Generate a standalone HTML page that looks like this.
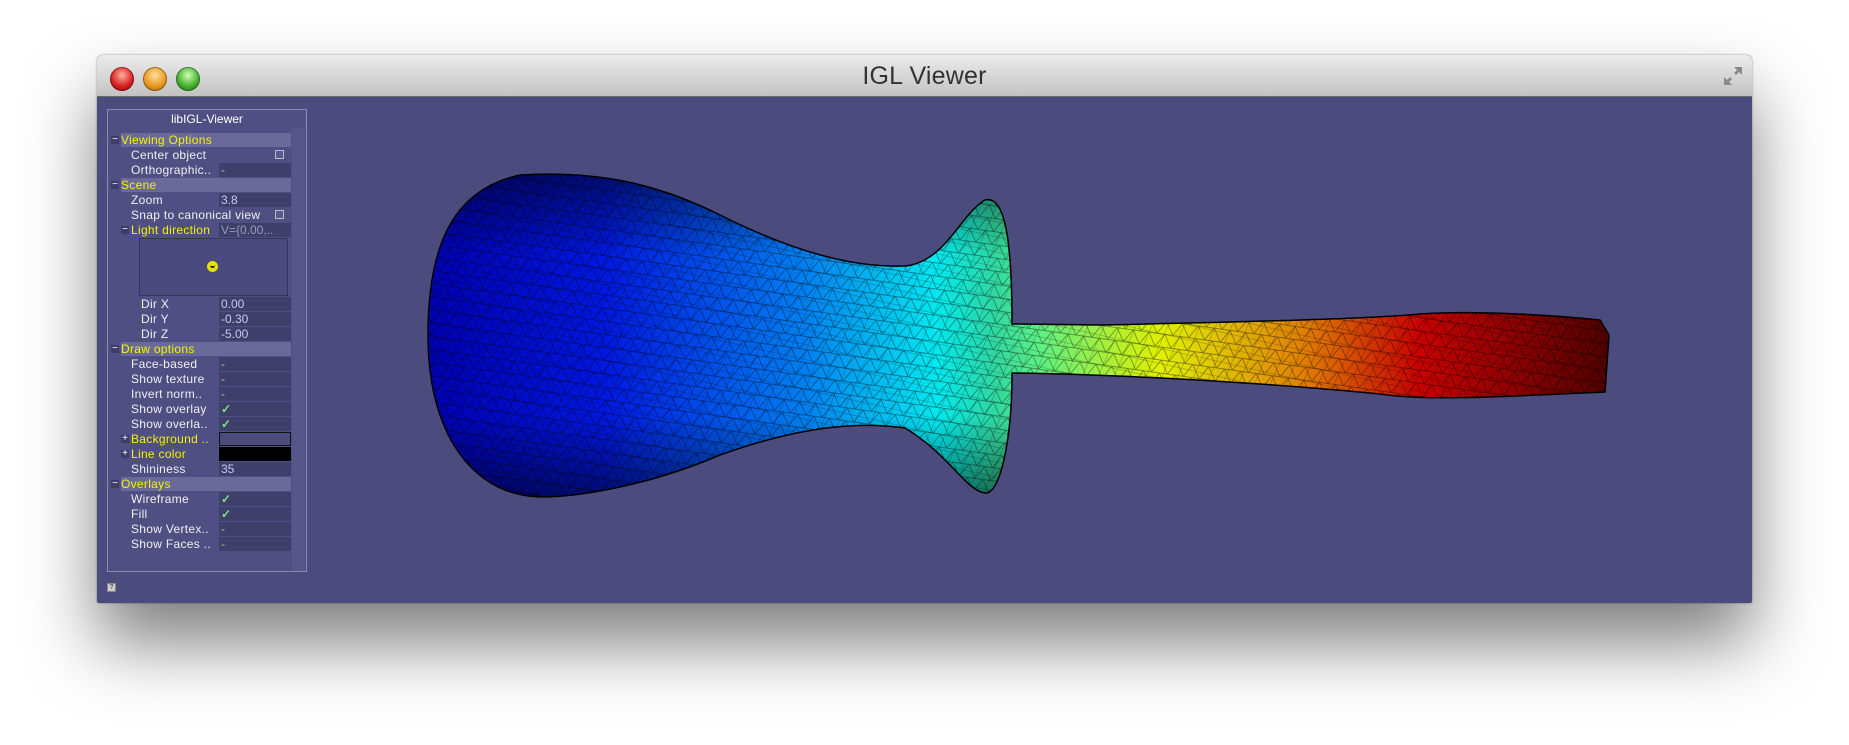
<!DOCTYPE html>
<html><head><meta charset="utf-8"><style>
*{margin:0;padding:0;box-sizing:border-box}
body{width:1849px;height:745px;background:#fff;position:relative;overflow:hidden;font-family:"Liberation Sans",sans-serif}
.win{position:absolute;left:97px;top:55px;width:1655px;height:548px;border-radius:6px 6px 2px 2px;box-shadow:0 40px 70px rgba(0,0,0,.5),0 0 2px rgba(0,0,0,.4);background:#4b4b7d;overflow:hidden}
.tb{position:absolute;left:0;top:0;width:100%;height:42px;background:linear-gradient(#ececec,#d3d3d3 60%,#c2c2c2);border-bottom:1px solid #6a6a6a}
.tb .t{position:absolute;left:0;width:100%;top:7px;text-align:center;font-size:25px;color:#333;letter-spacing:.2px}
.btn{position:absolute;top:12px;width:24px;height:24px;border-radius:50%;box-shadow:inset 0 0 0 1px rgba(0,0,0,.35)}
.panel{position:absolute;left:10px;top:54px;width:200px;height:463px;background:#4f4f83;border:1px solid #8a8ab0;}
.panel .ttl{position:absolute;left:0;width:100%;top:2px;text-align:center;color:#fff;font-size:12px}
.sb{position:absolute;left:184px;top:18px;width:13px;height:443px;background:#56568a}
.r{position:absolute;height:14px;font-size:12px;line-height:14px;color:#f0f0f0;letter-spacing:.3px;white-space:nowrap}
.h{background:#6a6a9a;color:#f4f400;left:14px;width:170px;padding-left:0}
.v{position:absolute;left:112px;width:72px;height:14px;background:#3f3f6c;font-size:12px;line-height:14px;color:#c8c8ee;padding-left:2px}
.m{position:absolute;width:8px;height:8px;background:#3c3c66;color:#fff;font-size:10px;line-height:7px;text-align:center}
.g{color:#7fe07f}
</style></head><body>
<div class="win">
 <div class="tb">
  <div class="btn" style="left:13px;background:radial-gradient(circle at 50% 35%,#ffb0a0,#d82020 55%,#900000)"></div>
  <div class="btn" style="left:46px;background:radial-gradient(circle at 50% 35%,#ffe0a0,#e89a20 55%,#a05800)"></div>
  <div class="btn" style="left:79px;background:radial-gradient(circle at 50% 35%,#d0ffb0,#48b030 55%,#1c7010)"></div>
  <div class="t">IGL Viewer</div>
  <svg style="position:absolute;right:8px;top:10px" width="22" height="22" viewBox="0 0 22 22"><path d="M12 2h8v8l-3-3-3 3-2-2 3-3z M10 20H2v-8l3 3 3-3 2 2-3 3z" fill="#8a8a8a"/></svg>
 </div>
 <svg style="position:absolute;left:-97px;top:-55px" width="1849" height="745">
  <defs>
   <linearGradient id="cg" gradientUnits="userSpaceOnUse" x1="428" y1="0" x2="1609" y2="0">
    <stop offset="0" stop-color="#0000b0"/><stop offset=".15" stop-color="#0018e0"/><stop offset=".32" stop-color="#0080f0"/><stop offset=".43" stop-color="#00e8f0"/><stop offset=".48" stop-color="#30d8a0"/><stop offset=".52" stop-color="#60f080"/><stop offset=".62" stop-color="#e0f000"/><stop offset=".74" stop-color="#e08000"/><stop offset=".84" stop-color="#c80000"/><stop offset="1" stop-color="#500000"/>
   </linearGradient>
   <linearGradient id="sh" x1="0" y1="0" x2="0" y2="1">
    <stop offset="0" stop-color="#000" stop-opacity=".5"/><stop offset=".25" stop-color="#000" stop-opacity="0"/><stop offset=".75" stop-color="#000" stop-opacity="0"/><stop offset="1" stop-color="#000" stop-opacity=".5"/>
   </linearGradient>
   <pattern id="wf" width="16" height="13" patternUnits="userSpaceOnUse" patternTransform="rotate(8)">
    <path d="M0 0H16M0 0L8 13M16 0L8 13M0 13H16" stroke="#000" stroke-opacity=".5" stroke-width=".7" fill="none"/>
   </pattern>
   <pattern id="wf2" width="23" height="19" patternUnits="userSpaceOnUse" patternTransform="rotate(-27)">
    <path d="M0 0L23 19M0 19L23 0" stroke="#000" stroke-opacity=".3" stroke-width=".6" fill="none"/>
   </pattern>
   <path id="shape" d="M428 336C428 250 450 190 520 175C600 170 660 185 720 215C790 250 850 268 905 266C945 262 960 215 985 200C1005 195 1012 240 1012 324L1100 325C1250 322 1380 318 1420 314C1480 310 1560 316 1600 320L1609 335L1605 392L1560 394C1480 398 1420 400 1380 394C1300 386 1150 375 1012 373C1012 440 1000 495 985 493C965 490 950 455 905 428C850 420 790 430 720 455C650 485 580 497 540 497C470 495 428 430 428 336Z"/>
  </defs>
  <use href="#shape" fill="url(#cg)"/>
  <use href="#shape" fill="url(#sh)"/>
  <use href="#shape" fill="url(#wf)"/>
  <use href="#shape" fill="url(#wf2)"/>
  <use href="#shape" fill="none" stroke="#000" stroke-width="1.5"/>
 </svg>
 <div class="panel">
  <div class="ttl">libIGL-Viewer</div>
  <div class="sb"></div>
 </div>
 <div style="position:absolute;left:10px;top:528px;width:9px;height:9px;background:#ccc;border:1px solid #888;font-size:7px;line-height:7px;text-align:center;color:#333">?</div>
</div>
<div style="position:absolute;left:0;top:0">
<div class="m" style="left:111px;top:136px">−</div><div class="r h" style="left:121px;top:133px;width:170px">Viewing Options</div>
<div class="r" style="left:131px;top:148px">Center object</div><div style="position:absolute;left:275px;top:150px;width:9px;height:9px;border:1px solid #bbb;background:#5a5a90"></div>
<div class="r" style="left:131px;top:163px">Orthographic..</div><div class="v g" style="left:219px;top:163px">-</div>
<div class="m" style="left:111px;top:181px">−</div><div class="r h" style="left:121px;top:178px;width:170px">Scene</div>
<div class="r" style="left:131px;top:193px">Zoom</div><div class="v" style="left:219px;top:193px">3.8</div>
<div class="r" style="left:131px;top:208px">Snap to canonical view</div><div style="position:absolute;left:275px;top:210px;width:9px;height:9px;border:1px solid #bbb;background:#5a5a90"></div>
<div class="m" style="left:121px;top:226px">−</div><div class="r" style="left:131px;top:223px;color:#f4f400">Light direction</div><div class="v" style="left:219px;top:223px;color:#9a9ab8">V={0.00,..</div>
<div style="position:absolute;left:139px;top:238px;width:149px;height:58px;border:1px solid #35355a;background:#4a4a7e"></div>
<div style="position:absolute;left:207px;top:261px;width:11px;height:11px;border-radius:50%;background:#e8e000"><div style="position:absolute;left:3px;top:4px;width:5px;height:3px;border-bottom:2px solid #222;border-radius:0 0 3px 3px"></div></div>
<div class="r" style="left:141px;top:297px">Dir X</div><div class="v" style="left:219px;top:297px">0.00</div>
<div class="r" style="left:141px;top:312px">Dir Y</div><div class="v" style="left:219px;top:312px">-0.30</div>
<div class="r" style="left:141px;top:327px">Dir Z</div><div class="v" style="left:219px;top:327px">-5.00</div>
<div class="m" style="left:111px;top:345px">−</div><div class="r h" style="left:121px;top:342px;width:170px">Draw options</div>
<div class="r" style="left:131px;top:357px">Face-based</div><div class="v g" style="left:219px;top:357px">-</div>
<div class="r" style="left:131px;top:372px">Show texture</div><div class="v g" style="left:219px;top:372px">-</div>
<div class="r" style="left:131px;top:387px">Invert norm..</div><div class="v g" style="left:219px;top:387px">-</div>
<div class="r" style="left:131px;top:402px">Show overlay</div><div class="v g" style="left:219px;top:402px;font-weight:bold">✓</div>
<div class="r" style="left:131px;top:417px">Show overla..</div><div class="v g" style="left:219px;top:417px;font-weight:bold">✓</div>
<div class="m" style="left:121px;top:435px">+</div><div class="r" style="left:131px;top:432px;color:#f4f400">Background ..</div><div class="v" style="left:219px;top:432px;background:#4b4b7d;border:1px solid #111"></div>
<div class="m" style="left:121px;top:450px">+</div><div class="r" style="left:131px;top:447px;color:#f4f400">Line color</div><div class="v" style="left:219px;top:447px;background:#000"></div>
<div class="r" style="left:131px;top:462px">Shininess</div><div class="v" style="left:219px;top:462px">35</div>
<div class="m" style="left:111px;top:480px">−</div><div class="r h" style="left:121px;top:477px;width:170px">Overlays</div>
<div class="r" style="left:131px;top:492px">Wireframe</div><div class="v g" style="left:219px;top:492px;font-weight:bold">✓</div>
<div class="r" style="left:131px;top:507px">Fill</div><div class="v g" style="left:219px;top:507px;font-weight:bold">✓</div>
<div class="r" style="left:131px;top:522px">Show Vertex..</div><div class="v g" style="left:219px;top:522px">-</div>
<div class="r" style="left:131px;top:537px">Show Faces ..</div><div class="v g" style="left:219px;top:537px">-</div>
</div>
</body></html>
